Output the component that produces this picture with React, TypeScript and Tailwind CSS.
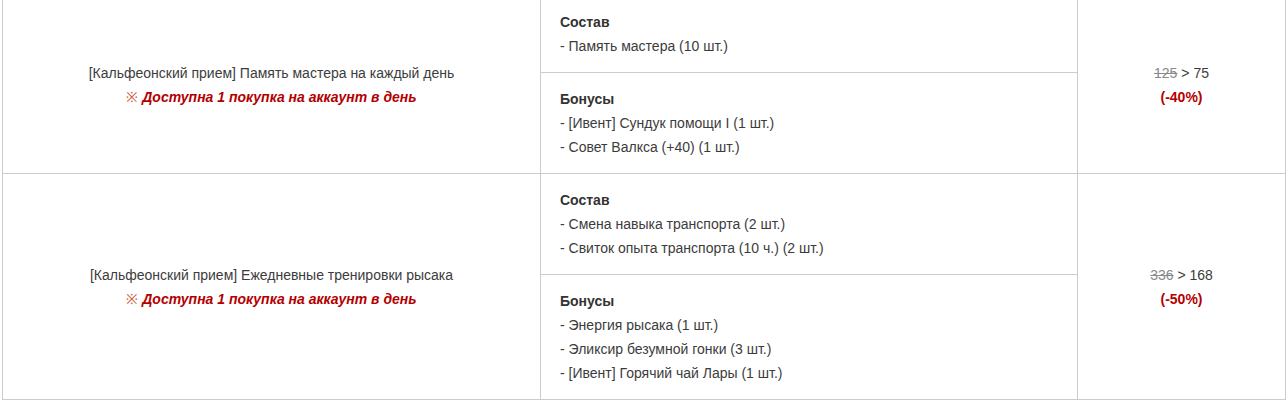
import React from "react";

type Row = {
  name: string;
  comp: string[];
  bonus: string[];
  oldPrice: string;
  newPrice: string;
  disc: string;
};

const rows: Row[] = [
  {
    name: "[Кальфеонский прием] Память мастера на каждый день",
    comp: ["- Память мастера (10 шт.)"],
    bonus: ["- [Ивент] Сундук помощи I (1 шт.)", "- Совет Валкса (+40) (1 шт.)"],
    oldPrice: "125",
    newPrice: "75",
    disc: "(-40%)",
  },
  {
    name: "[Кальфеонский прием] Ежедневные тренировки рысака",
    comp: ["- Смена навыка транспорта (2 шт.)", "- Свиток опыта транспорта (10 ч.) (2 шт.)"],
    bonus: ["- Энергия рысака (1 шт.)", "- Эликсир безумной гонки (3 шт.)", "- [Ивент] Горячий чай Лары (1 шт.)"],
    oldPrice: "336",
    newPrice: "168",
    disc: "(-50%)",
  },
];

function Sub({ title, items, last }: { title: string; items: string[]; last?: boolean }) {
  return (
    <div className={`px-[19px] py-[14px] ${last ? "" : "border-b border-[#cccccc]"}`}>
      <div className="font-bold text-[#333333]">{title}</div>
      {items.map((t) => (
        <div key={t}>{t}</div>
      ))}
    </div>
  );
}

export default function App() {
  return (
    <div
      className="bg-white w-[1288px] h-[402px] overflow-hidden text-[14px] leading-[24px] text-[#3c3c3c]"
      style={{ fontFamily: '"Liberation Sans", Arial, sans-serif' }}
    >
      <div className="ml-[2px] -mt-[5px] w-[1284px] border-l border-t border-[#cccccc]">
        {rows.map((r) => (
          <div key={r.name} className="flex border-b border-[#cccccc]">
            <div className="w-[538px] shrink-0 border-r border-[#cccccc] flex flex-col items-center justify-center text-center">
              <div>{r.name}</div>
              <div className="text-[#b40000]">
                <span className="text-[#d0604a]">※</span>{" "}
                <span className="font-bold italic">Доступна 1 покупка на аккаунт в день</span>
              </div>
            </div>
            <div className="w-[537px] shrink-0 border-r border-[#cccccc] flex flex-col">
              <Sub title="Состав" items={r.comp} />
              <Sub title="Бонусы" items={r.bonus} last />
            </div>
            <div className="w-[208px] shrink-0 border-r border-[#cccccc] flex flex-col items-center justify-center text-center">
              <div>
                <span className="line-through text-[#888888]">{r.oldPrice}</span> &gt; {r.newPrice}
              </div>
              <div className="font-bold text-[#b40000]">{r.disc}</div>
            </div>
          </div>
        ))}
      </div>
    </div>
  );
}
